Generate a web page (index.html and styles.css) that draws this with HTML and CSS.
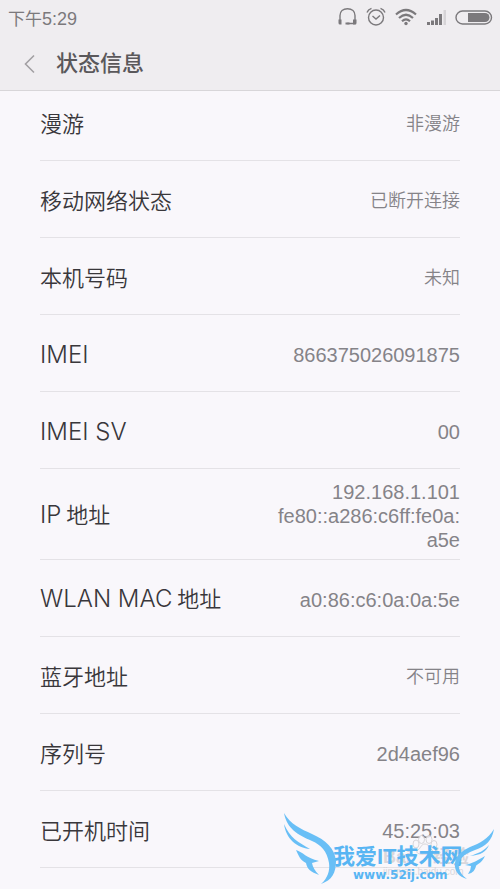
FILE: index.html
```html
<!DOCTYPE html>
<html lang="zh-CN">
<head>
<meta charset="utf-8">
<meta name="viewport" content="width=device-width, initial-scale=1">
<title>状态信息</title>
<link rel="stylesheet" href="styles.css">
</head>
<body>
<header class="top">
  <div class="statusbar">
    <span class="clock"><span class="period">下午</span>5:29</span>
    <div class="indicators">
      <svg width="20" height="20" viewBox="0 0 20 20" fill="none" stroke="#7b797c" stroke-width="1.4"><path d="M3 15V8.500C3 4.500 6 1.700 10.500 1.700S18 4.500 18 8.500V16.500H10"/><path d="M1.500 12.500h3v5H3A1.500 1.500 0 0 1 1.500 16zM16 12.500h3.500v3.500a1.500 1.500 0 0 1-1.500 1.500h-2zM8.500 15.500h4v2h-4z" fill="#7b797c" stroke="none"/></svg>
      <svg width="20" height="20" viewBox="0 0 20 20" fill="none" stroke="#7b797c" stroke-width="1.400"><circle cx="10" cy="10.500" r="7.500"/><path d="M6.500 9l3.500 3 4-3.500M1 5.500Q2 2.500 5.500 1.300M19 5.500Q18 2.500 14.500 1.300"/></svg>
      <svg width="22" height="20" viewBox="0 0 22 20" fill="none" stroke="#7b797c" stroke-width="2.200"><path d="M1 7.500Q11-1.500 21 7.500M4 11Q11 4.500 18 11M7 14.300Q11 10.500 15 14.300"/><circle cx="11" cy="16.500" r="1.700" fill="#7b797c" stroke="none"/></svg>
      <svg width="20" height="20" viewBox="0 0 20 20" fill="#7b797c"><path d="M1 15h3v3H1zM5 13.500h3V18H5zM9 11h3v7H9zM13 7h3v11h-3z"/><path d="M17.500 3H20v15h-2.500z" fill="#d6d4d7"/></svg>
      <svg width="38" height="20" viewBox="0 0 38 20" fill="none" stroke="#7b797c" stroke-width="1.400"><rect x="1" y="4" width="35.500" height="13" rx="6.500"/><path d="M13 6h17a4.500 4.500 0 0 1 0 9H13z" fill="#7b797c" stroke="none"/></svg>
    </div>
  </div>
  <div class="titlebar">
    <button class="back" type="button" aria-label="返回"><svg width="12" height="20" viewBox="0 0 12 20" fill="none" stroke="#a2a0a3" stroke-width="1.600"><path d="M10 1.500L1.500 10l8.500 8.500"/></svg></button>
    <h1>状态信息</h1>
  </div>
</header>
<main>
  <dl class="list">
    <div class="row"><dt>漫游</dt><dd class="zh">非漫游</dd></div>
    <div class="row"><dt>移动网络状态</dt><dd class="zh">已断开连接</dd></div>
    <div class="row"><dt>本机号码</dt><dd class="zh">未知</dd></div>
    <div class="row"><dt class="latin">IMEI</dt><dd>866375026091875</dd></div>
    <div class="row"><dt class="latin">IMEI SV</dt><dd>00</dd></div>
    <div class="row"><dt><span class="latin">IP</span> 地址</dt><dd>192.168.1.101<br>fe80::a286:c6ff:fe0a:<br>a5e</dd></div>
    <div class="row"><dt><span class="latin">WLAN MAC</span> 地址</dt><dd>a0:86:c6:0a:0a:5e</dd></div>
    <div class="row"><dt>蓝牙地址</dt><dd class="zh">不可用</dd></div>
    <div class="row"><dt>序列号</dt><dd>2d4aef96</dd></div>
    <div class="row"><dt>已开机时间</dt><dd>45:25:03</dd></div>
  </dl>
</main>
<aside class="stamp stamp-grey">
  <svg class="paw" width="26" height="20" viewBox="0 0 26 20"><ellipse cx="4" cy="9" rx="3" ry="4"/><ellipse cx="9.500" cy="4.500" rx="3" ry="4"/><ellipse cx="17" cy="4.500" rx="3" ry="4"/><ellipse cx="22" cy="9.500" rx="3" ry="4"/><path d="M13 9C9 9 9 13 6 15s0 5 7 4c7 1 10-2 7-4s-3-6-7-6z"/></svg>
  <span class="brand">Bai<span class="du">du</span>经验</span>
  <span class="brand-url">jingyan.baidu.com</span>
</aside>
<aside class="stamp stamp-blue">
  <svg class="wings" width="222" height="80" viewBox="0 0 222 80" fill="#69bff6">
    <path d="M6 4C12 15 23 20 34 25C48 31 57 40 58 52C58 64 54 71 43 75C50 69 52 61 51 54C49 42 43 36 34 32C20 26 9 20 6 4z"/>
    <path d="M6 15C12 29 20 33 32 40C19 39 8 30 6 15z"/>
    <path d="M18 41C25 43 28 49 41 52L34 54Q35 60 41 66C33 63 29 60 28 54C22 51 21 47 18 41z"/>
    <path d="M216 20C214 32 208 37 197 41C185 45 179 52 181 59C182 64 185 67 189 70C181 68 176 62 177 54C178 46 184 42 192 38C202 34 210 30 216 20z"/>
    <path d="M211 36C208 43 203 46 192 47C201 44 206 42 211 36z"/>
    <path d="M207 47C203 55 199 55 198 57C197 61 195 64 190 65Q193 61 193 57L187 56C196 54 200 51 207 47z"/>
  </svg>
  <span class="site">我爱IT技术网</span>
  <span class="site-url">www.52ij.com</span>
</aside>
</body>
</html>
```

FILE: styles.css
```css
body { position: relative; min-height: 100vh; margin: 0; background: #f9f7fb; font-family: "Liberation Sans", "Noto Sans CJK SC", sans-serif; }
.top { position: relative; background: #efedf0; border-bottom: 1px solid #d8d6d9; }
.statusbar { display: flex; justify-content: space-between; align-items: center; height: 34px; padding: 0 7px 0 8px; }
.clock { color: #7b797c; font-size: 18px; }
.period { font-size: 17px; }
.indicators { display: flex; gap: 9px; }
.titlebar { display: flex; align-items: center; box-sizing: border-box; height: 56px; padding: 4px 0 0 16px; }
.back { display: flex; padding: 8px; border: 0; background: none; }
h1 { margin: 0; padding-left: 12px; font-size: 22px; line-height: 30px; font-weight: 500; color: #5a585b; }
.list { margin: -7px 40px 0; }
.row { display: flex; justify-content: space-between; align-items: center; box-sizing: border-box; min-height: 77px; padding-top: 4px; border-bottom: 1px solid #e4e2e6; }
dt { padding-bottom: 4px; font: 350 22px/32px "Noto Sans CJK SC", sans-serif; color: #39373b; }
.latin { padding: 0; font: 300 24px/32px Inter, sans-serif; }
dd { margin: 0; padding: 7px 0; font-size: 20px; line-height: 24px; color: #858388; text-align: right; }
.zh { font-size: 18px; font-weight: 350; }
.stamp { position: absolute; right: 0; bottom: 0; display: flex; flex-direction: column; box-sizing: border-box; width: 222px; height: 80px; white-space: nowrap; }
.stamp-grey { padding: 38px 0 0 105px; color: #d2d0d4; opacity: .8; }
.paw { position: absolute; left: 134px; top: 26px; fill: #f9f7fb; stroke: #cfcdd1; }
.brand { font-size: 18px; line-height: 20px; font-weight: 700; }
.du { visibility: hidden; }
.brand-url { font-size: 10px; line-height: 10px; }
.stamp-blue { padding: 36px 0 0 55px; color: #58b5f3; }
.wings { position: absolute; left: 0; top: 0; }
.site { font-size: 22px; line-height: 24px; font-weight: 700; }
.site-url { padding-left: 20px; font: 700 12px/12px "DejaVu Sans", sans-serif; }
```
